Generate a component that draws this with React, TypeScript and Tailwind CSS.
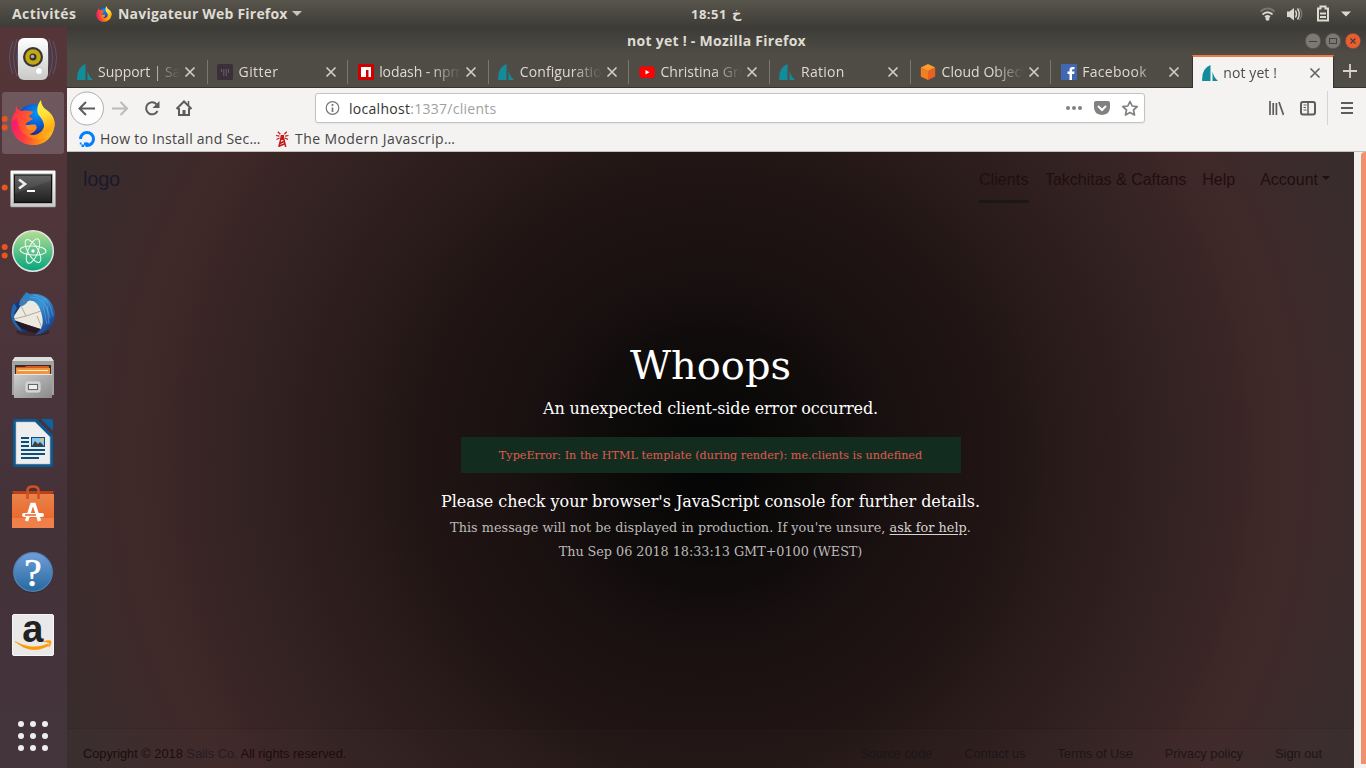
import React from "react";

const ui = "font-['Open_Sans','Noto_Sans',sans-serif]";

function FirefoxLogo({ className, x, y, width, height }: { className?: string; x?: number; y?: number; width?: number; height?: number }) {
  return (
    <svg className={className} x={x} y={y} width={width} height={height} viewBox="0 0 44 46">
      <defs>
        <linearGradient id="fxBody" x1="0" y1="0.3" x2="1" y2="0.6">
          <stop offset="0" stopColor="#ff2f4c" />
          <stop offset="0.35" stopColor="#ff5a2c" />
          <stop offset="0.75" stopColor="#ff9a12" />
          <stop offset="1" stopColor="#ffc01e" />
        </linearGradient>
        <linearGradient id="fxTail" x1="0" y1="0" x2="0.2" y2="1">
          <stop offset="0" stopColor="#fff44f" />
          <stop offset="0.45" stopColor="#ffe03a" />
          <stop offset="0.75" stopColor="#ffb81c" />
          <stop offset="1" stopColor="#ff9512" stopOpacity="0" />
        </linearGradient>
        <radialGradient id="fxGlobe" cx="0.6" cy="0.3" r="0.7">
          <stop offset="0" stopColor="#0098f5" />
          <stop offset="0.5" stopColor="#0a62dc" />
          <stop offset="1" stopColor="#1b2a86" />
        </radialGradient>
        <linearGradient id="fxLow" x1="0" y1="0.2" x2="1" y2="0.4">
          <stop offset="0" stopColor="#f4117c" />
          <stop offset="0.4" stopColor="#ff3647" />
          <stop offset="1" stopColor="#ff780e" stopOpacity="0" />
        </linearGradient>
      </defs>
      <circle cx="22.5" cy="19.5" r="15.500" fill="url(#fxGlobe)" />
      <path d="M5 5C6 9 8 11 11 11C14 10 17 11 22 11.500C22 14 18 15 18 16.500L22 19L18.500 21C16 22 14 24 15 26C18 30 22 27 26 27C25 31 22 33.500 18 34C25 37 32 32 33 26C33 22 31 19 29 16L40 14C43 18 44 22 43.500 26C42 38 33 45 22.500 45C10 45 1 36 .5 25C.2 19 2 14 4.500 12Z" fill="url(#fxBody)" />
      <path d="M.6 22C0 36 11 45 22 45C31 45 38 40 41 34C36 39 30 40 24 39C13 37 7 30 6 18Z" fill="url(#fxLow)" opacity=".85" />
      <path d="M30 0C26 5 25 11 28 15.500C31 19 34 23 33 28C32 33 29 36 26 38C34 40 42 36 43.600 26C44.500 18 39 12 35 9.500C32 7.500 30 4 30 0Z" fill="url(#fxTail)" />
      <path d="M14.500 24.500C17 26 20 24 24 24.500C27 26 25 29 20 30C17 30 15 28 14.500 24.500Z" fill="#ff8a2c" />
    </svg>
  );
}

function Slot({ children, dots = 0, active = false }: { children: React.ReactNode; dots?: number; active?: boolean }) {
  return (
    <svg className="block h-16 w-[66px] shrink-0" viewBox="0 0 66 64">
      {active && <rect x="2" y="1" width="62" height="62" rx="3" fill="#6f585d" />}
      {dots === 1 && <circle cx="4.700" cy="32.500" r="3" fill="#e95420" />}
      {dots === 2 && (
        <g fill="#e95420">
          <circle cx="4.700" cy="28" r="3" />
          <circle cx="4.700" cy="36.500" r="3" />
        </g>
      )}
      {children}
    </svg>
  );
}

function Dock() {
  return (
    <aside className="flex w-[67px] shrink-0 flex-col bg-[linear-gradient(to_bottom,#553538_0%,#50363a_25%,#49343b_50%,#443239_68%,#44343b_100%)]">
      <svg width="0" height="0" className="absolute">
        <defs>
          <linearGradient id="white" x1="0" y1="0" x2="0" y2="1"><stop offset="0" stopColor="#fff" /><stop offset="1" stopColor="#c9c9c7" /></linearGradient>
          <linearGradient id="term" x1="0" y1="0" x2="0" y2="1"><stop offset="0" stopColor="#575757" /><stop offset="1" stopColor="#222" /></linearGradient>
          <linearGradient id="atom" x1="0" y1="0" x2="0" y2="1"><stop offset="0" stopColor="#b6df93" /><stop offset="1" stopColor="#02a57c" /></linearGradient>
          <linearGradient id="bird" x1="0" y1="0" x2="1" y2="1"><stop offset="0" stopColor="#2777b8" /><stop offset=".45" stopColor="#3a93d4" /><stop offset="1" stopColor="#0d2276" /></linearGradient>
          <linearGradient id="drawer" x1="0" y1="0" x2="1" y2="1"><stop offset="0" stopColor="#cfcfcf" /><stop offset=".5" stopColor="#aaa" /><stop offset="1" stopColor="#8a8a8a" /></linearGradient>
          <linearGradient id="bag" x1="0" y1="0" x2="0" y2="1"><stop offset="0" stopColor="#e8834a" /><stop offset=".7" stopColor="#ec6a2e" /><stop offset=".71" stopColor="#f07f48" /><stop offset="1" stopColor="#f0814c" /></linearGradient>
          <linearGradient id="help" x1="0" y1="0" x2="0" y2="1"><stop offset="0" stopColor="#6f9fd8" /><stop offset="1" stopColor="#27689f" /></linearGradient>
        </defs>
      </svg>
      <Slot>
        <g fill="none" stroke="#56638c" opacity=".75">
          <path d="M17 12Q10 31 17 49M13 14Q6 31 13 47M49 12Q56 31 49 49M53 14Q60 31 53 47" />
          <path d="M20 15Q15 30 20 45M46 15Q51 30 46 45" strokeWidth="2" />
        </g>
        <rect x="18" y="11" width="30" height="42" rx="6" fill="url(#white)" />
        <circle cx="33" cy="30" r="10" fill="#35363a" />
        <circle cx="33" cy="30" r="7.800" fill="#c3a80f" />
        <circle cx="33" cy="30" r="3.500" fill="#333" />
        <circle cx="32.500" cy="29.500" r="1.800" fill="#aaa" />
        <circle cx="39" cy="44" r="3.600" fill="#fff" stroke="#ccc" />
        <circle cx="25" cy="45.500" r="2.500" fill="none" stroke="#d2d2d2" />
      </Slot>
      <Slot active dots={2}>
        <FirefoxLogo x={11} y={9} width={44} height={46} />
      </Slot>
      <Slot dots={1}>
        <g transform="translate(0,.5)">
          <rect x="10.500" y="15" width="45" height="36.500" rx="1" fill="url(#white)" stroke="#999" strokeWidth=".6" />
          <rect x="13.500" y="18.500" width="39" height="29.500" fill="#111" stroke="#aaa" />
          <rect x="15" y="20" width="36" height="26" fill="url(#term)" />
          <path d="M15 20H51V25L15 38Z" fill="#fff" opacity=".07" />
          <path d="M19 24L25 28.500L19 33" fill="none" stroke="#eee" strokeWidth="2.600" />
          <path d="M27 35.500H35" stroke="#fff" strokeWidth="2" />
        </g>
      </Slot>
      <Slot dots={2}>
        <circle cx="33" cy="32" r="20.300" fill="url(#atom)" stroke="#e4e4e4" strokeWidth="1.500" />
        <g fill="none" stroke="#f3fbf5" strokeWidth="1">
          <ellipse cx="33" cy="31.500" rx="13" ry="4.500" transform="rotate(3 33 32)" />
          <ellipse cx="33" cy="32" rx="13" ry="5" transform="rotate(60 33 32)" />
          <ellipse cx="33" cy="32" rx="13" ry="5" transform="rotate(112 33 32)" />
        </g>
        <circle cx="33" cy="32" r="1.700" fill="#fff" />
      </Slot>
      <Slot>
        <ellipse cx="33" cy="49" rx="17" ry="4" fill="#271c23" opacity=".5" />
        <path d="M13 21C8 31 11 42 22 49L45 48L52 25L30 14Z" fill="#1b3678" />
        <path d="M14 33L22 21L30 17L42 20L46 36L42 47L14 37Z" fill="#ece9df" />
        <path d="M21 23L26 33L41 28M14 36L26 33M42 45L37 33" fill="none" stroke="#b0aba0" />
        <path d="M19 22C20 15 24 13 26 9L30 11C43 9 53 17 55 30C55 42 48 50 35 52C42 47 44 41 42 33C40 22 34 16 28 18C25 23 21 24 19 22Z" fill="url(#bird)" />
        <path d="M30 14Q46 13 50 35M33 12Q50 13 53 33M43 22L47 41M47 23L49 41" fill="none" stroke="#65b8ea" opacity=".5" />
        <path d="M14 20C8 31 11 42 22 49L19 43C14 38 12 32 17 25Z" fill="#2467ae" />
        <path d="M15 38L41 46L36 50Q20 48 15 38Z" fill="#2a1925" />
        <circle cx="24" cy="18" r="1" fill="#e8552a" />
      </Slot>
      <Slot>
        <g transform="translate(0,1)">
          <path d="M15 9H51L54 14V47H12V14Z" fill="#a2a2a0" />
          <path d="M15 9H51L54 13H12Z" fill="#dededc" />
          <rect x="15" y="17" width="36" height="10" fill="#3a2a23" />
          <path d="M16 19H25L26 18H49V27H16Z" fill="#d35a23" />
          <path d="M16 20H50V27H16Z" fill="#f2943e" />
          <path d="M18 22.500H48" stroke="#fff0d5" />
          <path d="M14 26H52V50H14Z" fill="url(#drawer)" />
          <path d="M14 26.500H52" stroke="#e5e5e5" />
          <rect x="26" y="34" width="14" height="10" rx="1.500" fill="#ccc" stroke="#ddd" />
          <rect x="28.500" y="36.500" width="9" height="5" fill="#eee" stroke="#666" />
        </g>
      </Slot>
      <Slot>
        <path d="M15 8H37L53 24V54Q53 56 51 56H15Q13 56 13 54V10Q13 8 15 8Z" fill="#0b5a94" />
        <path d="M36 7.500H42L53.500 19V25Z" fill="#46343b" />
        <path d="M41 8H51Q53 8 53 10V20Z" fill="#0c639f" />
        <path d="M16 11H35L50 26V53H16Z" fill="#eee" stroke="#bbb" strokeWidth=".6" />
        <path d="M21 27H29M21 31H29M21 35H29M21 39H45M21 43H45M21 47H39" stroke="#0b4f7d" strokeWidth="2" />
        <rect x="31.500" y="26.500" width="13" height="9" fill="#86c5ef" stroke="#0b4f7d" />
        <path d="M32 35L35 30L38 33L40 31L44 35Z" fill="#404040" />
        <circle cx="42" cy="29" r="1.500" fill="#f7c434" />
      </Slot>
      <Slot>
        <path d="M12 16H54L52 20H14Z" fill="#b9401a" />
        <path d="M12 19H54V53H12Z" fill="url(#bag)" />
        <path d="M27.500 24V15.500Q27.500 11.500 33 11.500T38.500 15.500V24" fill="none" stroke="#d1501f" strokeWidth="2.600" />
        <path d="M26.500 46L31.800 29.500H34.200L39.500 46" fill="none" stroke="#fff" strokeWidth="3.400" />
        <path d="M24 40H42" stroke="#fff" strokeWidth="4" strokeLinecap="round" />
        <path d="M25 40H36" stroke="#e6622a" strokeWidth="1.500" />
      </Slot>
      <Slot>
        <circle cx="33" cy="34" r="20" fill="#222" opacity=".35" />
        <circle cx="33" cy="33" r="19.300" fill="url(#help)" stroke="#4f83b8" strokeWidth="1.300" />
        <text x="33" y="47" textAnchor="middle" fill="#fff" stroke="#fff" strokeWidth=".7" fontSize="39" fontFamily="Liberation Serif, serif">?</text>
      </Slot>
      <Slot>
        <rect x="12.500" y="11.500" width="41" height="41" rx="1.500" fill="#e9e9e9" stroke="#f6f6f6" />
        <text x="32.800" y="39" textAnchor="middle" fill="#222" fontSize="38" fontFamily="Liberation Sans, sans-serif" fontWeight="bold">a</text>
        <path d="M15 38.500Q32 48 48 41L49 42.500Q31 52.500 15 38.500ZM44 38.500Q48 37 51 38Q51.500 41 49 44Q50 41 49 39.500Z" fill="#ff9900" stroke="#ff9900" strokeWidth=".6" />
      </Slot>
      <div className="grow" />
      <svg className="mb-4 ml-[17px] block h-8 w-8" viewBox="0 0 32 32" fill="#eee">
        {[4, 16, 28].map((x) => [4, 16, 28].map((y) => <circle key={`${x}-${y}`} cx={x} cy={y} r="3" />))}
      </svg>
    </aside>
  );
}

function SailsIcon() {
  return (
    <svg className="h-4 w-4 shrink-0" viewBox="0 0 16 16" fill="#128b9b">
      <path d="M8.500 0V16H.2Q-.6 3.500 8.500 0Z" />
      <path d="M10.500 6.500Q11.500 12 16 16H10.500Z" />
    </svg>
  );
}
function GitterIcon() {
  return (
    <svg className="h-4 w-4 shrink-0" viewBox="0 0 16 16">
      <rect width="16" height="16" rx="1.500" fill="#3b3039" />
      <path d="M4.500 5V8M6.800 5V12M9.200 5V12M11.500 5V9" stroke="#6b6068" />
    </svg>
  );
}
function NpmIcon() {
  return (
    <svg className="h-4 w-4 shrink-0" viewBox="0 0 16 16">
      <rect width="16" height="16" fill="#d00000" />
      <path d="M3 3H13V13H10.500V6H8V13H3Z" fill="#fff" />
    </svg>
  );
}
function YoutubeIcon() {
  return (
    <svg className="h-4 w-4 shrink-0" viewBox="0 0 16 16">
      <rect y="2.500" x=".3" width="15.400" height="11.500" rx="3" fill="#f00" />
      <path d="M6.500 6L10.500 8.200L6.500 10.500Z" fill="#fff" />
    </svg>
  );
}
function CubeIcon() {
  return (
    <svg className="h-4 w-4 shrink-0" viewBox="0 0 16 16">
      <path d="M8 0L15.200 3.600L8 7.300L.8 3.600Z" fill="#ff9c2e" />
      <path d="M.8 3.600L8 7.300V16L.8 12.400Z" fill="#f67d22" />
      <path d="M15.200 3.600L8 7.300V16L15.200 12.400Z" fill="#ec6122" />
    </svg>
  );
}
function FacebookIcon() {
  return (
    <svg className="h-4 w-4 shrink-0" viewBox="0 0 16 16">
      <rect width="16" height="16" fill="#4267b2" />
      <path d="M8.500 16V10H6.500V7.500H8.500V6Q8.500 3 11.500 3H13.500V5.300H12Q11 5.300 11 6.500V7.500H13.500L13.200 10H11V16Z" fill="#fff" />
    </svg>
  );
}

const tabs = [
  { title: "Support | Sails.js", icon: <SailsIcon />, track: "tracking-[-0.05px]" },
  { title: "Gitter", icon: <GitterIcon />, track: "tracking-[0.4px]" },
  { title: "lodash - npm", icon: <NpmIcon />, track: "tracking-[-0.1px]" },
  { title: "Configuration", icon: <SailsIcon />, track: "tracking-[0.1px]" },
  { title: "Christina Grimmie", icon: <YoutubeIcon />, track: "tracking-[0.05px]" },
  { title: "Ration", icon: <SailsIcon />, track: "tracking-[0.3px]" },
  { title: "Cloud Objects", icon: <CubeIcon />, track: "tracking-[0.05px]" },
  { title: "Facebook", icon: <FacebookIcon />, track: "tracking-[0.3px]" },
  { title: "not yet !", icon: <SailsIcon />, track: "tracking-[0.1px]", active: true },
];

function TabStrip() {
  return (
    <div className="flex h-[34px] border-b border-[#33322e]">
      {tabs.map((t, i) => (
        <div
          key={t.title}
          className={`flex shrink-0 items-center ${t.active ? "mt-px -mb-px w-[142px] border-x border-t-2 border-x-[#33322e] border-t-[#f07746] bg-[#f4f3f2] pl-[9px] text-[#4c4c4c]" : "w-[140.6px] pl-[9.500px] pt-[2px] text-[#dfdbd2]"}`}
        >
          {t.icon}
          <span className={`ml-[5.500px] w-[82px] overflow-hidden whitespace-nowrap text-[14px] leading-5 [mask-image:linear-gradient(to_right,black_52px,transparent_82px)] ${t.track}`}>{t.title}</span>
          <svg className={`ml-[4px] h-3 w-3 shrink-0 ${t.active ? "stroke-[#666]" : "stroke-[#d0ccc4]"}`} viewBox="0 0 12 12" fill="none" strokeWidth="1.700">
            <path d="M1.500 1.500L10.500 10.500M10.500 1.500L1.500 10.500" />
          </svg>
          {i < 7 && <span className="ml-auto h-6 w-px bg-[#7a776e]" />}
        </div>
      ))}
      <svg className="ml-[8px] mt-[9px] h-4 w-4" viewBox="0 0 16 16" stroke="#d6d2ca" strokeWidth="1.800">
        <path d="M8 1V15M1 8H15" />
      </svg>
    </div>
  );
}

function NavBar() {
  return (
    <div className="flex h-[39px] items-center text-[#5c5c5a]">
      <svg className="ml-[2px] h-9 w-9" viewBox="0 0 36 36" fill="none">
        <circle cx="18" cy="18.500" r="16.500" fill="#fdfdfd" stroke="#aeaead" />
        <path d="M26 18.500H11M17 12L10.500 18.500L17 25" stroke="#5c5c5a" strokeWidth="2" />
      </svg>
      <svg className="ml-[7px] h-4 w-4" viewBox="0 0 16 16" fill="none" stroke="#bbb" strokeWidth="2"><path d="M0 8.500H15M8.500 2L15 8.500L8.500 15" /></svg>
      <svg className="ml-4 h-4 w-4" viewBox="0 0 16 16" fill="none">
        <path d="M12.500 4.200A6 6 0 1 0 13.500 11" stroke="currentColor" strokeWidth="2" />
        <path d="M15.500 1V8H8.500Z" fill="currentColor" />
      </svg>
      <svg className="ml-4 h-4 w-4" viewBox="0 0 16 16" fill="none" stroke="currentColor" strokeWidth="2">
        <path d="M.5 9L8 1.500L15.500 9M3 8V15H13V8" />
        <path d="M8 15V10" strokeWidth="3" />
        <path d="M12.500 1V5" strokeWidth="1.500" />
      </svg>
      <div className="ml-[123px] flex h-[30px] w-[830px] items-center rounded-[3px] border border-[#c4c3c1] bg-white shadow-[0_1px_2px_rgba(0,0,0,0.06)]">
        <svg className="ml-[9px] h-4 w-4" viewBox="0 0 16 16" fill="none" stroke="#777">
          <circle cx="7.500" cy="8" r="6.300" strokeWidth="1.200" />
          <path d="M7.500 7.500V12M7.500 4V6" strokeWidth="1.700" />
        </svg>
        <span className="ml-[8px] pt-px text-[14px] tracking-[0.28px] text-[#a0a0a0]"><span className="text-[#333]">localhost</span>:1337/clients</span>
        <svg className="ml-auto h-4 w-[76px] text-[#818180]" viewBox="0 0 76 16" fill="currentColor">
          <circle cx="4" cy="8" r="2" /><circle cx="10" cy="8" r="2" /><circle cx="16" cy="8" r="2" />
          <path d="M32 1H44Q46 1 46 3V7Q46 14.500 38 15Q30 14.500 30 7V3Q30 1 32 1Z" />
          <path d="M34 6L38 10L42 6" fill="none" stroke="white" strokeWidth="2" />
          <path d="M66 1.500L68.200 6L73.200 6.600L69.500 10L70.500 15L66 12.500L61.500 15L62.500 10L58.800 6.600L63.800 6Z" fill="none" stroke="currentColor" strokeWidth="1.700" strokeLinejoin="round" />
        </svg>
        <span className="w-[4px]" />
      </div>
      <svg className="ml-[123px] h-4 w-4" viewBox="0 0 16 16" fill="none" stroke="currentColor" strokeWidth="1.700">
        <path d="M2 1V15M5.200 3V15M8.400 3V15M11 2L15.500 15" />
      </svg>
      <svg className="ml-4 h-4 w-4" viewBox="0 0 16 16" fill="none" stroke="currentColor">
        <rect x="1" y="2" width="14" height="12.500" rx="2" strokeWidth="2" />
        <path d="M8 2V14" strokeWidth="1.500" /><path d="M3.500 5H6.500M3.500 7.500H6M3.500 10H6.500" />
      </svg>
      <span className="ml-[11px] h-[34px] w-px bg-[#d5d4d2]" />
      <svg className="ml-[11px] h-4 w-4" viewBox="0 0 16 16" stroke="currentColor" strokeWidth="2"><path d="M2 3H14M2 8H14M2 13H14" /></svg>
    </div>
  );
}

function Bookmarks() {
  return (
    <div className="flex h-[24px] items-center pl-3 text-[14px] leading-5 text-[#444]">
      <svg className="h-4 w-4" viewBox="0 0 16 16" fill="none" stroke="#0080ff" strokeWidth="3">
        <path d="M1.500 8A6.500 6.500 0 1 1 8 14.500V11.500" />
        <path d="M5 11.500H8V14.500H5ZM2.500 13.500H5V16H2.500ZM.8 11.500H2.500V13.500H.8Z" fill="#0080ff" stroke="none" />
      </svg>
      <span className="ml-[5px] w-[161px] whitespace-nowrap tracking-[0.26px]">How to Install and Sec…</span>
      <svg className="ml-[14px] h-4 w-4" viewBox="0 0 16 16" fill="none" stroke="#c41a1a" strokeWidth="1.200">
        <path d="M3.800 16L6.500 5.500M10.700 16L8.200 5.500M5 12.500L9.500 10M4.500 15L10.200 12.500" strokeWidth="1.500" />
        <path d="M1 4.500L4.500 5.200M13.500 4.500L10 5.200M2.800 .8L5.300 3.200M11.800 .8L9.300 3.200M1.500 8.500L4.500 7M13 8.500L10 7" />
        <path d="M5.700 4H9V9H5.700Z" fill="#c41a1a" stroke="none" />
      </svg>
      <span className="ml-[4px] whitespace-nowrap tracking-[0.42px]">The Modern Javascrip…</span>
    </div>
  );
}

function WebPage() {
  return (
    <div className="flex min-h-0 flex-1 bg-[#f2f1f0]">
      <main className="flex w-[1287px] flex-col bg-[radial-gradient(circle_at_center,#040404_0px,#0d0b0a_100px,#180f10_175px,#1c1211_220px,#201514_290px,#291b1a_360px,#332222_460px,#392525_520px,#402828_570px,#3d2929_605px,#3b2b2c_650px,#382d2d_713px)] font-['Liberation_Sans',sans-serif]">
        <header className="flex h-[55px] items-center px-4 text-[16px] text-[#210e10]">
          <span className="pb-[2px] text-[20px] tracking-[-0.2px] text-[#191a2c]">logo</span>
          <nav className="ml-auto flex h-full pr-[8px]">
            <span className="mr-4 h-[51px] w-[50px] whitespace-nowrap border-b-[3px] border-[#1a1918] leading-[55px] tracking-[0.1px]">Clients</span>
            <span className="mr-4 leading-[55px]">Takchitas &amp; Caftans</span>
            <span className="mr-[25px] leading-[55px]">Help</span>
            <span className="flex items-center leading-[55px]">Account<span className="mb-1 ml-1 border-x-[4px] border-t-[4px] border-x-transparent border-t-[#210e10]" /></span>
          </nav>
        </header>
        <section className="flex flex-1 flex-col items-center pt-[130px] font-['DejaVu_Serif',serif] text-white">
          <h1 className="text-[40px] leading-[56px]">Whoops</h1>
          <p className="mt-[4px] text-[16px] leading-6 tracking-[-0.12px]">An unexpected client-side error occurred.</p>
          <p className="mt-[16px] flex h-9 w-[500px] items-center justify-center bg-[#122d20] pt-[2px] text-[11.200px] text-[#e5574f]">TypeError: In the HTML template (during render): me.clients is undefined</p>
          <p className="mt-[17px] text-[16px] leading-6 tracking-[-0.04px]">Please check your browser's JavaScript console for further details.</p>
          <p className="mt-[2px] text-[12.800px] leading-6 tracking-[0.04px] text-[#bcb9b9]">This message will not be displayed in production. If you're unsure, <u className="text-[#d6d3d3] underline-offset-2">ask for help</u>.</p>
          <p className="text-[12.800px] leading-6 tracking-[-0.04px] text-[#bcb9b9]">Thu Sep 06 2018 18:33:13 GMT+0100 (WEST)</p>
        </section>
        <footer className="flex h-10 items-center border-t border-black/10 bg-white/[0.01] px-4 pt-[10px] text-[12.800px] text-[#1c0c0d]">
          <span>Copyright © 2018 <span className="text-[#251b29]">Sails Co.</span> All rights reserved.</span>
          <div className="ml-auto flex gap-8 pr-4 text-[#1c1618]">
            <span>Source code</span><span>Contact us</span><span>Terms of Use</span><span>Privacy policy</span><span>Sign out</span>
          </div>
        </footer>
      </main>
      <div className="mb-1 ml-[7px] w-[5px] rounded-tl bg-[#f2906c]" />
    </div>
  );
}

function TopBar() {
  return (
    <header className="flex h-[27px] shrink-0 items-center bg-[linear-gradient(to_bottom,#58554c,#3d3c37)] text-[14px] font-bold text-[#dfdbd2]">
      <span className="ml-3 w-[84px] tracking-[0.4px]">Activités</span>
      <FirefoxLogo className="h-4 w-4" />
      <span className="ml-[6px] w-[170px] whitespace-nowrap tracking-[0.21px]">Navigateur Web Firefox</span>
      <svg className="ml-1 h-[5px] w-[10px]" viewBox="0 0 10 5" fill="#c8c5bd"><path d="M0 0H10L5 5Z" /></svg>
      <span dir="ltr" className="ml-[389px] flex h-5 whitespace-pre text-[13px] leading-5 tracking-[0.5px]"><span className="w-[41px]">18:51</span><span className="font-['DejaVu_Sans',sans-serif] tracking-normal">خ</span></span>
      <svg className="ml-auto mr-[14px] h-5 w-[94px]" viewBox="0 0 94 20" fill="none">
        <g transform="translate(1,0)">
          <path d="M1.500 7.500Q8.500 1.500 15.500 7.500" stroke="#77756d" strokeWidth="2" />
          <path d="M3.500 10.500Q8.500 6 13.500 10.500M6 13Q8.500 11 11 13" stroke="#dcd9d2" strokeWidth="1.700" />
          <circle cx="8.500" cy="14.800" r="2" fill="#dcd9d2" />
        </g>
        <path d="M29 7.500H31.500L36 4V16.500L31.500 13H29Z" fill="#dcd9d2" />
        <path d="M37.500 6.500Q39.500 10 37.500 13.500M39.500 4.500Q43 10 39.500 15.500" stroke="#dcd9d2" strokeWidth="1.400" />
        <path d="M41.500 4Q46 10 41.500 16" stroke="#77756d" strokeWidth="1.400" />
        <g transform="translate(.5,-.5)">
          <path d="M59.500 5H62V3H67V5H69.500V17H59.500Z" stroke="#dcd9d2" strokeWidth="2" />
          <path d="M61.500 10H67.500M61.500 13.500H67.500" stroke="#dcd9d2" strokeWidth="2" />
        </g>
        <path d="M83 7.500H93L88 12.500Z" fill="#dcd9d2" />
      </svg>
    </header>
  );
}

export default function App() {
  return (
    <div className={`flex h-[768px] w-[1366px] flex-col overflow-hidden ${ui}`}>
      <TopBar />
      <div className="flex min-h-0 flex-1">
        <Dock />
        <div className="flex w-[1299px] flex-col">
          <div className="bg-[linear-gradient(to_bottom,#3c3b37_0px,#4f4c45_27px,#504d46_61px)]">
            <div className="flex h-[27px] items-center">
              <span className="w-[1299px] shrink-0 text-center text-[14px] font-bold tracking-[0.27px] text-[#dfdbd2]">not yet ! - Mozilla Firefox</span>
              <svg className="-ml-[61px] h-4 w-[56px] shrink-0" viewBox="0 0 56 16" fill="none" stroke="#43423e">
                <circle cx="8" cy="8" r="7.700" fill="#7b7972" stroke="#504d46" strokeWidth=".6" />
                <path d="M4 8.500H12" />
                <circle cx="28" cy="8" r="7.700" fill="#7b7972" stroke="#504d46" strokeWidth=".6" />
                <rect x="24.500" y="5.500" width="7" height="5" />
                <circle cx="48" cy="8" r="7.700" fill="#eb5c2e" stroke="#504d46" strokeWidth=".6" />
                <path d="M45.500 5.500L50.500 10.500M50.500 5.500L45.500 10.500" strokeWidth="1.400" />
              </svg>
            </div>
            <TabStrip />
          </div>
          <div className="border-b border-[#c1c0be] bg-[#f4f3f2]">
            <NavBar />
            <Bookmarks />
          </div>
          <WebPage />
        </div>
      </div>
    </div>
  );
}
